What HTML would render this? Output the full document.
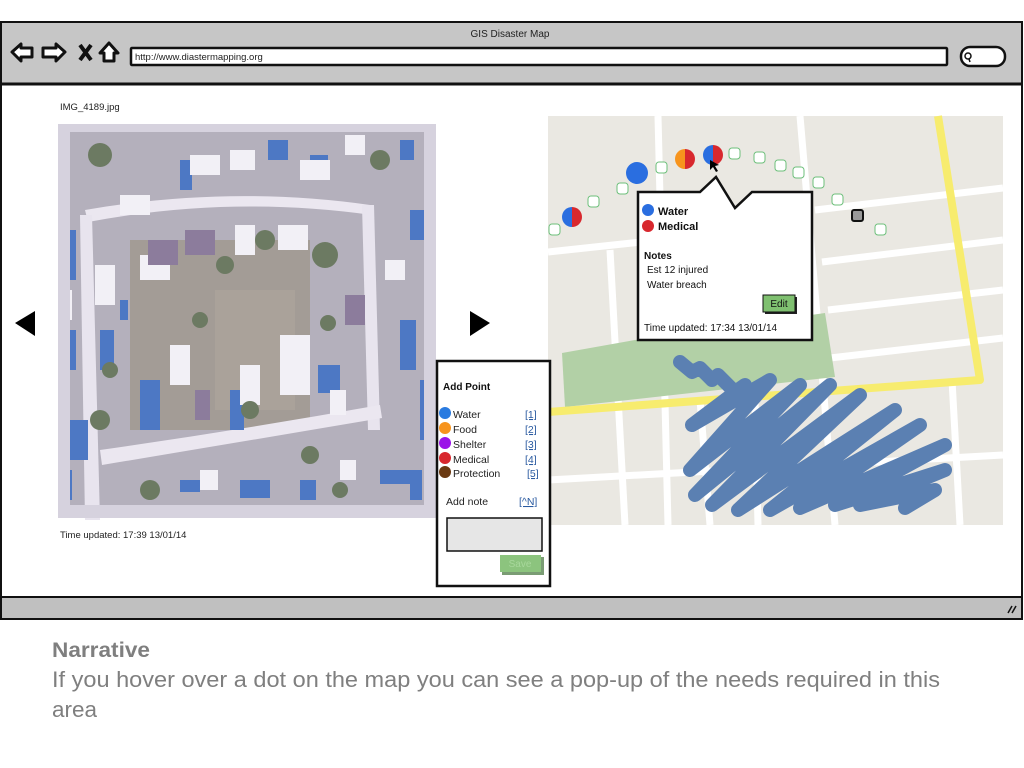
<!DOCTYPE html>
<html><head><meta charset="utf-8"><style>
html,body{margin:0;padding:0;background:#fff;width:1024px;height:768px;overflow:hidden}
svg{display:block}
text{font-family:"Liberation Sans",sans-serif}
</style></head><body>
<svg width="1024" height="768" viewBox="0 0 1024 768" xmlns="http://www.w3.org/2000/svg">
<rect x="1" y="22" width="1021" height="597" fill="#fff" stroke="#111" stroke-width="2"/>
<rect x="1" y="22" width="1021" height="62" fill="#c6c6c6" stroke="#111" stroke-width="2"/>
<line x1="1" y1="84" x2="1022" y2="84" stroke="#111" stroke-width="3"/>
<text x="510" y="37" font-size="10" text-anchor="middle" fill="#222">GIS Disaster Map</text>
<path d="M12 52 L21 44 L21 48 L32 48 L32 57 L21 57 L21 61 Z" fill="#fff" stroke="#111" stroke-width="3" stroke-linejoin="round"/>
<path d="M65 52 L56 44 L56 48 L43 48 L43 57 L56 57 L56 61 Z" fill="#fff" stroke="#111" stroke-width="3" stroke-linejoin="round"/>
<path d="M80 45 L91 60 M91 45 L80 60" stroke="#111" stroke-width="4"/>
<path d="M109 43 L118 53 L114 53 L114 61 L104 61 L104 53 L100 53 Z" fill="#fff" stroke="#111" stroke-width="3" stroke-linejoin="round"/>
<rect x="131" y="48" width="816" height="17" fill="#fff" stroke="#111" stroke-width="2.5" rx="1"/>
<text x="135" y="60" font-size="9.5" fill="#222">http://www.diastermapping.org</text>
<rect x="961" y="47" width="44" height="19" rx="9" fill="#fff" stroke="#111" stroke-width="2.5"/>
<circle cx="968" cy="56" r="3" fill="none" stroke="#111" stroke-width="1.5"/><line x1="969" y1="59" x2="970" y2="62" stroke="#111" stroke-width="1.5"/>
<rect x="1" y="597" width="1021" height="22" fill="#c0c0c0" stroke="#111" stroke-width="2"/>
<path d="M1008 613 L1012 606 M1012 613 L1016 606" stroke="#111" stroke-width="1.5"/>

<text x="60" y="110" font-size="9.5" fill="#222">IMG_4189.jpg</text>
<rect x="58" y="124" width="378" height="394" fill="#b4b0bc"/>
<rect x="130" y="240" width="180" height="190" fill="#a39c96"/>
<rect x="215" y="290" width="80" height="120" fill="#aaa29a"/>
<path d="M85 210 Q230 185 370 205 L372 215 Q230 195 88 222 Z" fill="#ebe7f0"/>
<path d="M80 215 L92 215 L100 520 L85 520 Z" fill="#e8e4ee"/>
<path d="M362 205 L374 205 L380 430 L368 430 Z" fill="#e8e4ee"/>
<path d="M100 450 Q240 430 380 405 L382 418 Q240 442 102 465 Z" fill="#ebe7f0"/>
<g fill="#4d78c4">
<rect x="62" y="230" width="14" height="50"/><rect x="66" y="330" width="10" height="40"/><rect x="100" y="330" width="14" height="40"/><rect x="268" y="140" width="20" height="20"/><rect x="310" y="155" width="18" height="12"/><rect x="140" y="380" width="20" height="50"/><rect x="230" y="390" width="14" height="40"/><rect x="318" y="365" width="22" height="28"/><rect x="410" y="210" width="14" height="30"/><rect x="400" y="320" width="16" height="50"/><rect x="380" y="470" width="30" height="14"/><rect x="240" y="480" width="30" height="18"/><rect x="70" y="420" width="18" height="40"/><rect x="420" y="380" width="14" height="60"/><rect x="180" y="160" width="12" height="30"/>
<rect x="120" y="300" width="8" height="20"/><rect x="60" y="470" width="12" height="30"/><rect x="410" y="470" width="12" height="30"/><rect x="180" y="480" width="20" height="12"/><rect x="300" y="480" width="16" height="20"/><rect x="400" y="140" width="14" height="20"/>
</g>
<g fill="#f2f0f6">
<rect x="120" y="195" width="30" height="20"/><rect x="230" y="150" width="25" height="20"/><rect x="190" y="155" width="30" height="20"/><rect x="95" y="265" width="20" height="40"/><rect x="140" y="255" width="30" height="25"/><rect x="235" y="225" width="20" height="30"/><rect x="278" y="225" width="30" height="25"/><rect x="280" y="335" width="30" height="60"/><rect x="240" y="365" width="20" height="40"/><rect x="170" y="345" width="20" height="40"/><rect x="345" y="135" width="20" height="20"/><rect x="385" y="260" width="20" height="20"/><rect x="60" y="290" width="12" height="30"/><rect x="300" y="160" width="30" height="20"/>
<rect x="330" y="390" width="16" height="25"/><rect x="200" y="470" width="18" height="20"/><rect x="340" y="460" width="16" height="20"/>
</g>
<g fill="#8c7c9c">
<rect x="148" y="240" width="30" height="25"/><rect x="185" y="230" width="30" height="25"/><rect x="345" y="295" width="20" height="30"/><rect x="195" y="390" width="15" height="30"/>
</g>
<g fill="#6c7a62">
<circle cx="100" cy="155" r="12"/><circle cx="265" cy="240" r="10"/><circle cx="225" cy="265" r="9"/><circle cx="325" cy="255" r="13"/><circle cx="328" cy="323" r="8"/><circle cx="250" cy="410" r="9"/><circle cx="110" cy="370" r="8"/><circle cx="100" cy="420" r="10"/><circle cx="310" cy="455" r="9"/><circle cx="380" cy="160" r="10"/><circle cx="150" cy="490" r="10"/><circle cx="340" cy="490" r="8"/><circle cx="200" cy="320" r="8"/>
</g>
<g fill="#d6d2de">
<rect x="58" y="124" width="12" height="394"/><rect x="424" y="124" width="12" height="394"/><rect x="58" y="124" width="378" height="8"/><rect x="58" y="505" width="378" height="13"/>
</g>
<text x="60" y="538" font-size="9.5" fill="#222">Time updated: 17:39 13/01/14</text>
<path d="M15 323 L35 311 L35 336 Z" fill="#000"/>
<path d="M490 323 L470 311 L470 336 Z" fill="#000"/>

<rect x="548" y="116" width="455" height="409" fill="#eae8e2"/>
<g stroke="#fff" stroke-width="7" fill="none">
<line x1="658" y1="116" x2="668" y2="525"/>
<line x1="800" y1="116" x2="835" y2="525"/>
<line x1="610" y1="250" x2="625" y2="525"/>
<line x1="700" y1="400" x2="710" y2="525"/>
<line x1="755" y1="400" x2="758" y2="525"/>
<line x1="952" y1="380" x2="960" y2="525"/>
<line x1="548" y1="252" x2="660" y2="240"/>
<line x1="815" y1="210" x2="1003" y2="188"/>
<line x1="822" y1="262" x2="1003" y2="240"/>
<line x1="828" y1="310" x2="1003" y2="290"/>
<line x1="830" y1="358" x2="1003" y2="338"/>
<line x1="548" y1="480" x2="1003" y2="455"/>
</g>
<path d="M562 353 L635 340 L825 313 L835 377 L565 407 Z" fill="#b2d0a6"/>
<path d="M548 412 L980 380 L938 116" stroke="#f7ec6e" stroke-width="8" fill="none" stroke-linejoin="round"/>
<path d="M680 362 L692 372 L700 368 L712 380 L718 375 L735 392 L745 385 L692 425 L770 380 L690 470 L800 385 L695 495 L830 385 L712 505 L860 395 L738 510 L895 410 L770 510 L920 425 L800 508 L945 445 L835 505 L945 470 L860 505 L935 490 L905 508"
 stroke="#5b80b2" stroke-width="14" fill="none" stroke-linejoin="round" stroke-linecap="round"/>
<g fill="#fff" stroke="#6cbf7a" stroke-width="1">
<rect x="549" y="224" width="11" height="11" rx="3"/><rect x="588" y="196" width="11" height="11" rx="3"/><rect x="617" y="183" width="11" height="11" rx="3"/><rect x="656" y="162" width="11" height="11" rx="3"/><rect x="729" y="148" width="11" height="11" rx="3"/><rect x="754" y="152" width="11" height="11" rx="3"/><rect x="775" y="160" width="11" height="11" rx="3"/><rect x="793" y="167" width="11" height="11" rx="3"/><rect x="813" y="177" width="11" height="11" rx="3"/><rect x="832" y="194" width="11" height="11" rx="3"/><rect x="875" y="224" width="11" height="11" rx="3"/>
</g>
<rect x="852" y="210" width="11" height="11" rx="2" fill="#999" stroke="#111" stroke-width="2"/>
<circle cx="637" cy="173" r="11" fill="#2a6ee0"/>
<path d="M572 207 A10 10 0 0 0 572 227 Z" fill="#2a6ee0"/><path d="M572 207 A10 10 0 0 1 572 227 Z" fill="#d8282e"/>
<path d="M685 149 A10 10 0 0 0 685 169 Z" fill="#f7941d"/><path d="M685 149 A10 10 0 0 1 685 169 Z" fill="#d8282e"/>
<path d="M713 145 A10 10 0 0 0 713 165 Z" fill="#2a6ee0"/><path d="M713 145 A10 10 0 0 1 713 165 Z" fill="#d8282e"/>
<path d="M710 160 L710 170 L713 167 L716 172 L718 171 L715 166 L719 165 Z" fill="#000"/>
<path d="M638 192 L700 192 L716 177 L735 208 L752 192 L812 192 L812 340 L638 340 Z" fill="#fff" stroke="#111" stroke-width="2.5"/>
<circle cx="648" cy="210" r="6" fill="#2a6ee0"/><text x="658" y="215" font-size="11" font-weight="bold" fill="#111">Water</text>
<circle cx="648" cy="226" r="6" fill="#d8282e"/><text x="658" y="230" font-size="11" font-weight="bold" fill="#111">Medical</text>
<text x="644" y="259" font-size="10" font-weight="bold" fill="#111">Notes</text>
<text x="647" y="273" font-size="10" fill="#111">Est 12 injured</text>
<text x="647" y="288" font-size="10" fill="#111">Water breach</text>
<rect x="765" y="297" width="32" height="17" fill="#222"/>
<rect x="763" y="295" width="32" height="17" fill="#7fc070" stroke="#111" stroke-width="1"/>
<text x="779" y="307" font-size="10" text-anchor="middle" fill="#111">Edit</text>
<text x="644" y="331" font-size="10" fill="#111">Time updated: 17:34 13/01/14</text>

<rect x="437" y="361" width="113" height="225" fill="#fff" stroke="#111" stroke-width="2.5"/>
<text x="443" y="390" font-size="10" font-weight="bold" fill="#111">Add Point</text>
<g font-size="10.5" fill="#222">
<circle cx="445" cy="413" r="6" fill="#2a7be0"/><text x="453" y="418">Water</text>
<circle cx="445" cy="428" r="6" fill="#f7941d"/><text x="453" y="433">Food</text>
<circle cx="445" cy="443" r="6" fill="#9b14e8"/><text x="453" y="448">Shelter</text>
<circle cx="445" cy="458" r="6" fill="#d8282e"/><text x="453" y="463">Medical</text>
<circle cx="445" cy="472" r="6" fill="#6b3a12"/><text x="453" y="477">Protection</text>
</g>
<g font-size="10.5" fill="#2a5aa0" text-decoration="underline">
<text x="525" y="418">[1]</text><text x="525" y="433">[2]</text><text x="525" y="448">[3]</text><text x="525" y="463">[4]</text><text x="527" y="477">[5]</text>
<text x="519" y="505">[^N]</text>
</g>
<text x="446" y="505" font-size="10.5" fill="#222">Add note</text>
<rect x="447" y="518" width="95" height="33" fill="#e6e6e6" stroke="#111" stroke-width="1.5"/>
<rect x="502" y="557" width="42" height="18" fill="#7a9c74"/>
<rect x="500" y="555" width="41" height="17" fill="#8cc47e"/>
<text x="520" y="567" font-size="10" text-anchor="middle" fill="#a8d89c">Save</text>

<text x="52" y="657" font-size="21" font-weight="bold" fill="#7f7f7f" textLength="98" lengthAdjust="spacingAndGlyphs">Narrative</text>
<text x="52" y="687" font-size="22" fill="#7f7f7f" textLength="888" lengthAdjust="spacingAndGlyphs">If you hover over a dot on the map you can see a pop-up of the needs required in this</text>
<text x="52" y="717" font-size="22" fill="#7f7f7f" textLength="45" lengthAdjust="spacingAndGlyphs">area</text>
</svg>
</body></html>
